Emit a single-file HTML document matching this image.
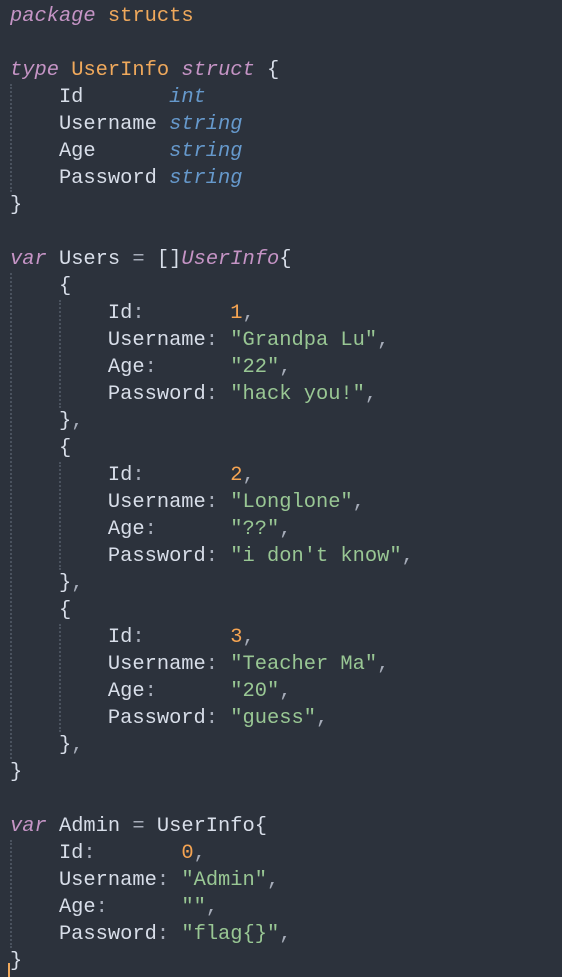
<!DOCTYPE html>
<html><head><style>
html,body{margin:0;padding:0;background:#2c323c;width:562px;height:977px;overflow:hidden}
pre{margin:0;padding:3px 0 0 10px;font-family:"Liberation Mono",monospace;font-size:20.4px;line-height:27px;color:#d8dee9;position:relative}
.k{color:#c594c5;font-style:italic}
.o{color:#f0a95c}
.t{color:#6699cc;font-style:italic}
.s{color:#99c794}
.n{color:#f5a452}
.p{color:#a6acb9}
.g{position:absolute;width:0;border-left:2px dotted #4a525e}
</style></head><body>
<div class="g" style="left:10px;top:84px;height:108px"></div>
<div class="g" style="left:10px;top:273px;height:486px"></div>
<div class="g" style="left:59px;top:300px;height:108px"></div>
<div class="g" style="left:59px;top:462px;height:108px"></div>
<div class="g" style="left:59px;top:624px;height:108px"></div>
<div class="g" style="left:10px;top:840px;height:108px"></div>
<div style="position:absolute;left:8px;top:963px;width:2px;height:14px;background:#f0a95c"></div>
<pre><span class="k">package</span> <span class="o">structs</span>

<span class="k">type</span> <span class="o">UserInfo</span> <span class="k">struct</span> {
    Id       <span class="t">int</span>
    Username <span class="t">string</span>
    Age      <span class="t">string</span>
    Password <span class="t">string</span>
}

<span class="k">var</span> Users <span class="p">=</span> []<span class="k">UserInfo</span>{
    {
        Id<span class="p">:</span>       <span class="n">1</span><span class="p">,</span>
        Username<span class="p">:</span> <span class="s">"Grandpa Lu"</span><span class="p">,</span>
        Age<span class="p">:</span>      <span class="s">"22"</span><span class="p">,</span>
        Password<span class="p">:</span> <span class="s">"hack you!"</span><span class="p">,</span>
    }<span class="p">,</span>
    {
        Id<span class="p">:</span>       <span class="n">2</span><span class="p">,</span>
        Username<span class="p">:</span> <span class="s">"Longlone"</span><span class="p">,</span>
        Age<span class="p">:</span>      <span class="s">"??"</span><span class="p">,</span>
        Password<span class="p">:</span> <span class="s">"i don't know"</span><span class="p">,</span>
    }<span class="p">,</span>
    {
        Id<span class="p">:</span>       <span class="n">3</span><span class="p">,</span>
        Username<span class="p">:</span> <span class="s">"Teacher Ma"</span><span class="p">,</span>
        Age<span class="p">:</span>      <span class="s">"20"</span><span class="p">,</span>
        Password<span class="p">:</span> <span class="s">"guess"</span><span class="p">,</span>
    }<span class="p">,</span>
}

<span class="k">var</span> Admin <span class="p">=</span> UserInfo{
    Id<span class="p">:</span>       <span class="n">0</span><span class="p">,</span>
    Username<span class="p">:</span> <span class="s">"Admin"</span><span class="p">,</span>
    Age<span class="p">:</span>      <span class="s">""</span><span class="p">,</span>
    Password<span class="p">:</span> <span class="s">"flag{}"</span><span class="p">,</span>
}</pre>
</body></html>
